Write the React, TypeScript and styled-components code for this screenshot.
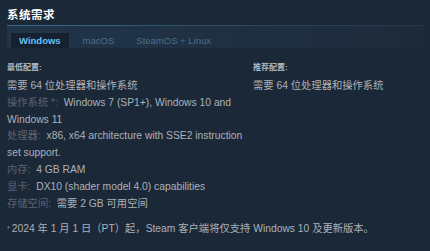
import styled, { createGlobalStyle } from "styled-components"

type TabProps = {
  $active?: boolean
}

type Row = {
  label?: string
  value: string
}

const GlobalStyle = createGlobalStyle`
  body {
    margin: 0;
    background: #1b2838;
    font-family: "Liberation Sans", "Noto Sans CJK SC", Arial, sans-serif;
  }
`;

const Page = styled.div`
  width: 430px;
  height: 251px;
  box-sizing: border-box;
  padding: 7px 7px 0 7px;
  background: #1b2838;
  overflow: hidden;
`;

const Title = styled.h2`
  margin: 0 0 2px 0;
  font-size: 11.5px;
  line-height: 16px;
  font-weight: bold;
  color: #ffffff;
  letter-spacing: 0.5px;
`;

const TabBar = styled.div`
  display: flex;
  align-items: flex-end;
  height: 22px;
  padding-left: 4px;
  border-top: 1px solid transparent;
  border-image: linear-gradient(to right, #3d6c8f, #2a4760 60%, #243a4f) 1;
  background: linear-gradient(to right, #213549, #1f2f41 60%, #1d2a3a);
`;

const Tab = styled.div<TabProps>`
  display: flex;
  align-items: center;
  height: 15px;
  padding: 0 8px;
  margin-right: 6px;
  font-size: 9.5px;
  font-weight: ${({ $active }) => ($active ? "bold" : "normal")};
  color: ${({ $active }) => ($active ? "#67c1f5" : "#4c6e8a")};
  background: ${({ $active }) => ($active ? "#162130" : "transparent")};
`;

const Columns = styled.div`
  display: grid;
  grid-template-columns: 240px 1fr;
  column-gap: 6px;
  margin-top: 14px;
`;

const Column = styled.div`
  display: flex;
  flex-direction: column;
`;

const ColumnHeader = styled.div`
  font-size: 8px;
  line-height: 12px;
  font-weight: bold;
  color: #c6d4df;
  opacity: 0.85;
  margin-bottom: 4px;
`;

const Line = styled.div`
  font-size: 10.3px;
  line-height: 16.8px;
  color: #acb2b8;
`;

const Label = styled.span`
  color: #5b6470;
`;

const Footnote = styled.div`
  margin-top: 9px;
  font-size: 10.3px;
  line-height: 16.8px;
  color: #acb2b8;
`;

const Star = styled.span`
  font-size: 7px;
  vertical-align: top;
  color: #8f98a0;
  margin-right: 2px;
`;

const minimum: Row[] = [
  { value: "需要 64 位处理器和操作系统" },
  { label: "操作系统 *:", value: "Windows 7 (SP1+), Windows 10 and Windows 11" },
  { label: "处理器:", value: "x86, x64 architecture with SSE2 instruction set support." },
  { label: "内存:", value: "4 GB RAM" },
  { label: "显卡:", value: "DX10 (shader model 4.0) capabilities" },
  { label: "存储空间:", value: "需要 2 GB 可用空间" },
]

const recommended: Row[] = [
  { value: "需要 64 位处理器和操作系统" },
]

const Spec = ({ title, rows }: { title: string; rows: Row[] }) => (
  <Column>
    <ColumnHeader>{title}</ColumnHeader>
    {rows.map((row, i) => (
      <Line key={i}>
        {row.label && <Label>{row.label}&nbsp; </Label>}
        {row.value}
      </Line>
    ))}
  </Column>
)

export default function App() {
  return (
    <Page>
      <GlobalStyle />
      <Title>系统需求</Title>
      <TabBar>
        <Tab $active>Windows</Tab>
        <Tab>macOS</Tab>
        <Tab>SteamOS + Linux</Tab>
      </TabBar>
      <Columns>
        <Spec title="最低配置:" rows={minimum} />
        <Spec title="推荐配置:" rows={recommended} />
      </Columns>
      <Footnote>
        <Star>*</Star>2024 年 1 月 1 日（PT）起，Steam 客户端将仅支持 Windows 10 及更新版本。
      </Footnote>
    </Page>
  )
}
